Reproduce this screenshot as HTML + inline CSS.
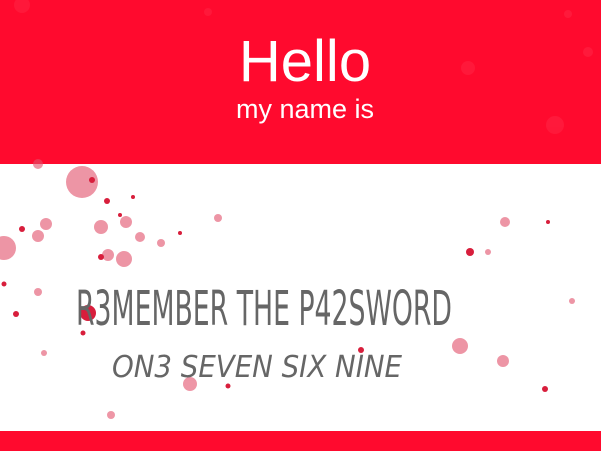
<!DOCTYPE html>
<html><head><style>
html,body{margin:0;padding:0;width:601px;height:451px;overflow:hidden;background:#fff}
</style></head><body>
<svg width="601" height="451" viewBox="0 0 601 451" xmlns="http://www.w3.org/2000/svg">
<rect x="0" y="0" width="601" height="164" fill="#ff0a2e"/>
<rect x="0" y="431" width="601" height="20" fill="#ff0a2e"/>
<g fill="#ffffff" opacity="0.06">
<circle cx="555" cy="125" r="9"/><circle cx="468" cy="68" r="7"/><circle cx="588" cy="52" r="5"/><circle cx="568" cy="14" r="4"/><circle cx="22" cy="5" r="8"/><circle cx="208" cy="12" r="4"/>
</g>
<text x="305" y="81" text-anchor="middle" fill="#fff" font-family="Liberation Sans, sans-serif" font-size="58">Hello</text>
<text x="305" y="118" text-anchor="middle" fill="#fff" font-family="Liberation Sans, sans-serif" font-size="27">my name is</text>
<g fill="#e2506a" opacity="0.6">
<circle cx="82" cy="182" r="16"/><circle cx="38" cy="164" r="5"/><circle cx="4" cy="248" r="12"/><circle cx="46" cy="224" r="6"/><circle cx="101" cy="227" r="7"/><circle cx="124" cy="259" r="8"/><circle cx="140" cy="237" r="5"/><circle cx="108" cy="255" r="6"/><circle cx="161" cy="243" r="4"/><circle cx="190" cy="384" r="7"/><circle cx="111" cy="415" r="4"/><circle cx="505" cy="222" r="5"/><circle cx="460" cy="346" r="8"/><circle cx="503" cy="361" r="6"/><circle cx="38" cy="292" r="4"/><circle cx="218" cy="218" r="4"/><circle cx="44" cy="353" r="3"/><circle cx="572" cy="301" r="3"/><circle cx="488" cy="252" r="3"/><circle cx="38" cy="236" r="6"/><circle cx="126" cy="222" r="6"/>
</g>
<g fill="#d81e3c">
<circle cx="101" cy="257" r="3"/><circle cx="92" cy="180" r="3"/><circle cx="107" cy="201" r="3"/><circle cx="22" cy="229" r="3"/><circle cx="4" cy="284" r="2.5"/><circle cx="16" cy="314" r="3"/><circle cx="88" cy="313" r="8"/><circle cx="228" cy="386" r="2.5"/><circle cx="470" cy="252" r="4"/><circle cx="361" cy="350" r="3"/><circle cx="133" cy="197" r="2"/><circle cx="180" cy="233" r="2"/><circle cx="545" cy="389" r="3"/><circle cx="120" cy="215" r="2"/><circle cx="548" cy="222" r="2"/><circle cx="83" cy="333" r="2.5"/>
</g>
<text x="76" y="325" font-size="48" textLength="376" lengthAdjust="spacingAndGlyphs" fill="#666" font-family="DejaVu Sans Condensed, sans-serif">R3MEMBER THE P42SWORD</text>
<text x="112" y="377" font-size="30" textLength="290" lengthAdjust="spacingAndGlyphs" fill="#666" font-family="DejaVu Sans Condensed, sans-serif" font-style="italic">ON3  SEVEN  SIX  NINE</text>
</svg>
</body></html>
